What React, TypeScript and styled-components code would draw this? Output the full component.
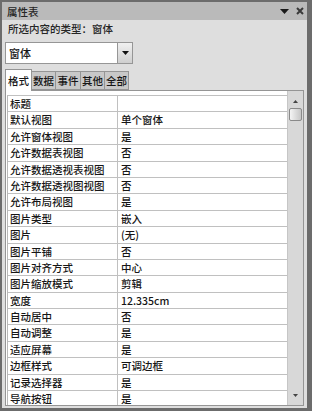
import styled, { createGlobalStyle } from "styled-components";

const GlobalStyle = createGlobalStyle`
    html, body {
        margin: 0;
        padding: 0;
        background: #ffffff;
    }
    * {
        box-sizing: border-box;
    }
`;

const FONT = `"Noto Sans CJK SC", "Liberation Sans", sans-serif`;

const rows: [string, string][] = [
    ["标题", ""],
    ["默认视图", "单个窗体"],
    ["允许窗体视图", "是"],
    ["允许数据表视图", "否"],
    ["允许数据透视表视图", "否"],
    ["允许数据透视图视图", "否"],
    ["允许布局视图", "是"],
    ["图片类型", "嵌入"],
    ["图片", "(无)"],
    ["图片平铺", "否"],
    ["图片对齐方式", "中心"],
    ["图片缩放模式", "剪辑"],
    ["宽度", "12.335cm"],
    ["自动居中", "否"],
    ["自动调整", "是"],
    ["适应屏幕", "是"],
    ["边框样式", "可调边框"],
    ["记录选择器", "是"],
    ["导航按钮", "是"],
];

const tabs = [
    { label: "格式", width: 27 },
    { label: "数据", width: 25 },
    { label: "事件", width: 26 },
    { label: "其他", width: 25 },
    { label: "全部", width: 25 },
];

const Window = styled.div`
    width: 312px;
    height: 411px;
    display: flex;
    flex-direction: column;
    background: #dedede;
    border-style: solid;
    border-color: #6c6c6c;
    border-width: 2px 5px 3px 2px;
    font-family: ${FONT};
    font-weight: 500;
    color: #161616;
    font-size: 10.5px;
`;

const TitleBar = styled.div`
    height: 18px;
    display: flex;
    align-items: center;
    justify-content: space-between;
    background: #bababa;
    padding: 0 3px 0 5px;
    color: #262626;
`;

const TitleIcons = styled.div`
    display: flex;
    align-items: center;
    gap: 7px;
`;

const Body = styled.div`
    flex: 1;
    display: flex;
    flex-direction: column;
    padding: 0 3px 2px 3px;
    min-height: 0;
`;

const TypeLabel = styled.div`
    margin-top: 2px;
    height: 14px;
    line-height: 14px;
    padding-left: 3px;
    color: #262626;
`;

const Combo = styled.div`
    margin-top: 6px;
    width: 128px;
    height: 22px;
    display: flex;
    background: #ffffff;
    border: 1px solid #969696;
`;

const ComboText = styled.div`
    flex: 1;
    padding-left: 3px;
    line-height: 20px;
    font-size: 11px;
`;

const ComboButton = styled.div`
    width: 15px;
    display: flex;
    align-items: center;
    justify-content: center;
    border-left: 1px solid #969696;
    background: linear-gradient(#f0f0f0, #cfcfcf);
`;

const TabRow = styled.div`
    margin-top: 5px;
    height: 21px;
    display: flex;
    align-items: flex-end;
    position: relative;
    z-index: 1;
`;

const Tab = styled.div<{ $active?: boolean; $w: number }>`
    width: ${(p) => p.$w}px;
    height: ${(p) => (p.$active ? 22 : 19)}px;
    margin-bottom: ${(p) => (p.$active ? -1 : 0)}px;
    display: flex;
    align-items: center;
    justify-content: center;
    background: ${(p) => (p.$active ? "#ffffff" : "#c8c8c8")};
    border: 1px solid #959595;
    border-bottom: ${(p) => (p.$active ? "none" : "1px solid #959595")};
    margin-right: -1px;
    padding-bottom: ${(p) => (p.$active ? 1 : 0)}px;
`;

const Panel = styled.div`
    flex: 1;
    min-height: 0;
    display: flex;
    background: #ffffff;
    border: 1px solid #959595;
`;

const TableArea = styled.div`
    flex: 1;
    padding: 4px 0 0 1px;
    overflow: hidden;
`;

const Table = styled.div`
    border-left: 1px solid #b8b8b8;
    border-top: 1px solid #c0c0c0;
`;

const Row = styled.div`
    height: 16.4px;
    display: grid;
    grid-template-columns: 109px 1fr;
    border-bottom: 1px solid #c0c0c0;
`;

const Cell = styled.div<{ $value?: boolean }>`
    padding-left: ${(p) => (p.$value ? 3 : 2)}px;
    line-height: 16px;
    white-space: nowrap;
    overflow: hidden;
    border-left: ${(p) => (p.$value ? "1px solid #c0c0c0" : "none")};
`;

const Scrollbar = styled.div`
    width: 16px;
    display: flex;
    flex-direction: column;
    align-items: center;
    background: #d8d8d8;
    border-left: 1px solid #c6c6c6;
    padding-top: 9px;
    padding-bottom: 8px;
`;

const Thumb = styled.div`
    margin-top: 5px;
    width: 13px;
    height: 13px;
    border: 1px solid #8a8a8a;
    border-radius: 2px;
    background: linear-gradient(90deg, #f4f4f4, #c6c6c6);
`;

const Spacer = styled.div`
    flex: 1;
`;

const Tri = ({ down, w, h, color }: { down?: boolean; w: number; h: number; color: string }) => (
    <svg width={w} height={h} viewBox={`0 0 ${w} ${h}`}>
        <polygon
            points={down ? `0,0 ${w},0 ${w / 2},${h}` : `0,${h} ${w},${h} ${w / 2},0`}
            fill={color}
        />
    </svg>
);

export default function App() {
    return (
        <>
            <GlobalStyle />
            <Window>
                <TitleBar>
                    <span>属性表</span>
                    <TitleIcons>
                        <Tri down w={9} h={5} color="#1a1a1a" />
                        <svg width="8" height="8" viewBox="0 0 8 8">
                            <path d="M1 1 L7 7 M7 1 L1 7" stroke="#3a3a3a" strokeWidth="2" />
                        </svg>
                    </TitleIcons>
                </TitleBar>
                <Body>
                    <TypeLabel>所选内容的类型：窗体</TypeLabel>
                    <Combo>
                        <ComboText>窗体</ComboText>
                        <ComboButton>
                            <Tri down w={7} h={4} color="#111" />
                        </ComboButton>
                    </Combo>
                    <TabRow>
                        {tabs.map((t, i) => (
                            <Tab key={t.label} $w={t.width} $active={i === 0}>
                                {t.label}
                            </Tab>
                        ))}
                    </TabRow>
                    <Panel>
                        <TableArea>
                            <Table>
                                {rows.map(([name, value]) => (
                                    <Row key={name}>
                                        <Cell>{name}</Cell>
                                        <Cell $value>{value}</Cell>
                                    </Row>
                                ))}
                            </Table>
                        </TableArea>
                        <Scrollbar>
                            <Tri w={5} h={3} color="#444" />
                            <Thumb />
                            <Spacer />
                            <Tri down w={5} h={3} color="#444" />
                        </Scrollbar>
                    </Panel>
                </Body>
            </Window>
        </>
    );
}
